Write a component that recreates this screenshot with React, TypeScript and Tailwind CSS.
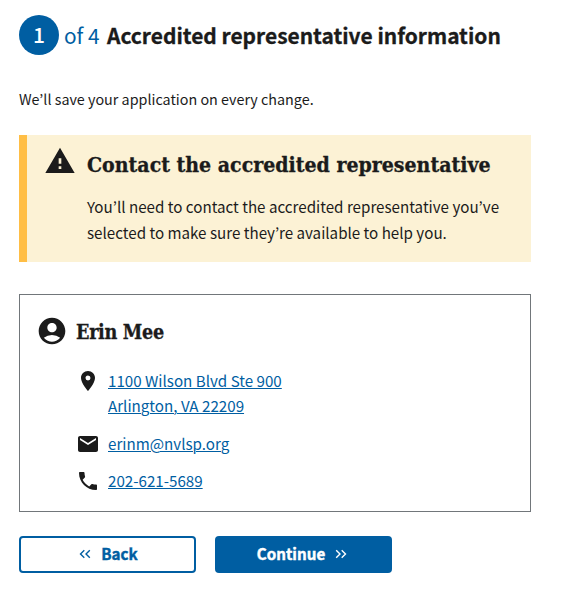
import type { ReactNode } from "react";
import {
  MdAccountCircle,
  MdEmail,
  MdLocationOn,
  MdPhone,
  MdWarning,
} from "react-icons/md";

const body = "font-['Noto_Sans_CJK_KR','Noto_Sans',sans-serif]";
const slab =
  "font-['DejaVu_Serif_Condensed','DejaVu_Serif',serif] font-bold [font-stretch:condensed] [-webkit-text-stroke:0.3px_#1b1b1b]";

function Contact({ icon, children }: { icon: ReactNode; children: ReactNode }) {
  return (
    <li className="flex">
      <span className="w-8 shrink-0 pt-px">{icon}</span>
      <a href="#" className="text-[15.17px] leading-[25px] text-[#005ea2] underline underline-offset-1 decoration-1">
        {children}
      </a>
    </li>
  );
}

function Chevrons({ flip = false }: { flip?: boolean }) {
  return (
    <svg
      viewBox="0 0 12 10"
      className={flip ? "h-[10px] w-3 rotate-180" : "h-[10px] w-3"}
      fill="none"
      stroke="currentColor"
      strokeWidth="1.4"
    >
      <path d="M5.3 1.2 1.5 5l3.8 3.8M10.8 1.2 7 5l3.8 3.8" />
    </svg>
  );
}

export default function App() {
  return (
    <main className={`${body} h-[609px] w-[566px] bg-white pl-[19px] pt-[15px] text-[#1b1b1b]`}>
      <h1 className="flex h-10 items-center whitespace-nowrap">
        <span className="flex size-10 items-center justify-center rounded-full bg-[#005ea2] pb-px text-[21px] font-medium leading-none text-white">
          1
        </span>
        <span className="ml-[5px] w-[43px] text-[20.8px] leading-10 text-[#005ea2]">of 4</span>
        <span className="text-[20.95px] font-bold leading-10 [-webkit-text-stroke:0.3px_#1b1b1b]">
          Accredited representative information
        </span>
      </h1>

      <p className="mt-8 h-6 whitespace-nowrap text-[14.33px] leading-6">We’ll save your application on every change.</p>

      <section className="mt-6 flex h-[127px] w-[512px] border-l-8 border-[#ffbe45] bg-[#fcf2d5] pl-[17px] pt-[10px]">
        <MdWarning className="size-8 shrink-0" />
        <div className="ml-[11px] whitespace-nowrap">
          <h2 className={`${slab} mt-[5px] text-[21.1px] leading-[30px]`}>Contact the accredited representative</h2>
          <p className="mt-[13px] text-[15.17px] leading-[26px]">
            You’ll need to contact the accredited representative you’ve
            <br />
            selected to make sure they’re available to help you.
          </p>
        </div>
      </section>

      <section className="mt-8 h-[218px] w-[512px] border border-[#71767a] pl-4 pt-5">
        <div className="flex h-8 items-center">
          <MdAccountCircle className="size-8" />
          <h3 className={`${slab} ml-2 pt-[3px] text-[19.6px] leading-8 tracking-[-0.3px]`}>Erin Mee</h3>
        </div>
        <ul className="ml-10 mt-[21px] flex flex-col gap-[12.5px] whitespace-nowrap">
          <Contact icon={<MdLocationOn className="size-6" />}>
            1100 Wilson Blvd Ste 900
            <br />
            Arlington, VA 22209
          </Contact>
          <Contact icon={<MdEmail className="size-6" />}>erinm@nvlsp.org</Contact>
          <Contact icon={<MdPhone className="size-6" />}>202-621-5689</Contact>
        </ul>
      </section>

      <div className="mt-6 flex gap-[19px] text-[15.2px] font-bold leading-none">
        <button className="flex h-[37px] w-[177px] items-center justify-center gap-[10px] rounded-[4px] border-2 border-[#005ea2] pb-0.5 pl-0.5 text-[#005ea2] [-webkit-text-stroke:0.4px_#005ea2]">
          <Chevrons />
          Back
        </button>
        <button className="flex h-[37px] w-[177px] items-center justify-center gap-[10px] rounded-[4px] bg-[#005ea2] pb-0.5 pr-[3px] text-white [-webkit-text-stroke:0.4px_#ffffff]">
          Continue
          <Chevrons flip />
        </button>
      </div>
    </main>
  );
}
